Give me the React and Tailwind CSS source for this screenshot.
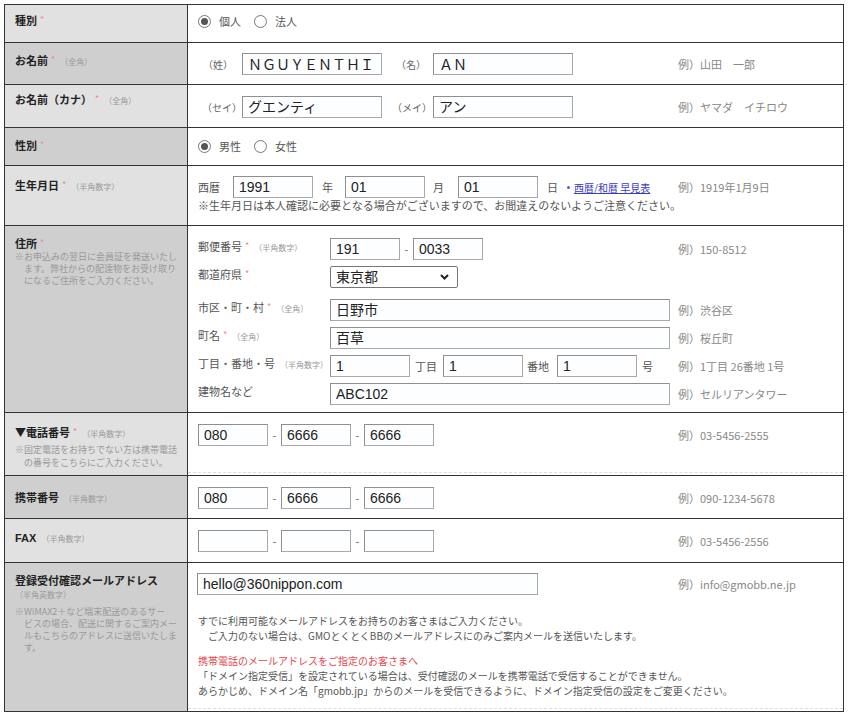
import React from 'react';

const ja = "font-['Noto_Sans_CJK_JP',sans-serif]";
const latin = "font-['Liberation_Sans','Noto_Sans_CJK_JP',sans-serif]";

const Req = () => <span className="ml-[3px] align-top text-[9px] font-normal text-[#f08a8a]">*</span>;
const Hint = ({ children }) => <span className="ml-[5px] text-[8px] font-normal text-[#999]">{children}</span>;

const Box = ({ w, children }) => (
    <div className={`h-[22px] ${w} shrink-0 overflow-hidden whitespace-nowrap border border-[#a9a9a9] border-l-[#8f8f8f] border-t-[#8f8f8f] bg-[#fcfeff] px-[5px] text-[14px] leading-[20px] text-[#222] ${latin}`}>
        {children}
    </div>
);

const Radio = ({ checked }) => (
    <span className="inline-flex h-[13px] w-[13px] items-center justify-center rounded-full border border-[#767676] bg-white">
        {checked && <span className="h-[7px] w-[7px] rounded-full bg-[#555]" />}
    </span>
);

const Dash = () => <span className="w-[13px] text-center text-[11px] text-[#666]">-</span>;

const Ex = ({ children }) => <div className="whitespace-nowrap text-[11px] text-[#888]">{children}</div>;

// one line of the value cell: main area + example column at x=678
const Line = ({ children, ex, className = '' }) => (
    <div className={`flex items-center ${className}`}>
        <div className="flex w-[480px] items-center">{children}</div>
        {ex && <Ex>{ex}</Ex>}
    </div>
);

const AddrLine = ({ label, children, ex, className = '' }) => (
    <div className={`flex items-start ${className}`}>
        <div className="w-[132px] shrink-0 whitespace-nowrap text-[11px] leading-[16px] text-[#555]">{label}</div>
        <div className="flex items-center">
            <div className="flex w-[348px] items-center text-[11px] text-[#555]">{children}</div>
            {ex && <Ex>{ex}</Ex>}
        </div>
    </div>
);

const Label = ({ bg, pt, children }) => (
    <div className={`w-[183px] shrink-0 border-r border-[#333] pl-[10px] ${bg} ${pt}`}>{children}</div>
);

const Title = ({ children }) => (
    <div className="whitespace-nowrap text-[11px] font-bold leading-[16px] text-[#222]">{children}</div>
);

const Note = ({ children, className = '' }) => (
    <div className={`whitespace-nowrap pl-[9px] -indent-[9px] text-[9px] text-[#999] ${className}`}>{children}</div>
);

const light = 'bg-[#e1e1e1]';
const dark = 'bg-[#cfcfcf]';

export default function App() {
    return (
        <div className={`h-[717px] w-[849px] bg-white pl-[4px] pt-[4px] ${ja}`}>
            <div className="w-[840px] border border-[#333]">
                {/* 種別 */}
                <div className="flex h-[38px] border-b border-[#333]">
                    <Label bg={light} pt="pt-[7px]">
                        <Title>種別<Req /></Title>
                    </Label>
                    <div className="flex-1 pl-[10px] pt-[8px]">
                        <div className="flex h-[16px] items-center text-[11px] text-[#555]">
                            <Radio checked />
                            <span className="ml-[8px]">個人</span>
                            <span className="ml-[13px] flex"><Radio /></span>
                            <span className="ml-[8px]">法人</span>
                        </div>
                    </div>
                </div>

                {/* お名前 */}
                <div className="flex h-[42px] border-b border-[#333]">
                    <Label bg={dark} pt="pt-[9px]">
                        <Title>お名前<Req /><Hint>（全角）</Hint></Title>
                    </Label>
                    <div className="flex-1 pl-[10px] pt-[10px]">
                        <Line ex="例）山田　一郎">
                            <span className="w-[44px] pl-[5px] text-[10px] text-[#666]">（姓）</span>
                            <Box w="w-[140px]"><span className={ja}>ＮＧＵＹＥＮＴＨＩ</span></Box>
                            <span className="w-[51px] pl-[14px] text-[10px] text-[#666]">（名）</span>
                            <Box w="w-[140px]"><span className={ja}>ＡＮ</span></Box>
                        </Line>
                    </div>
                </div>

                {/* お名前（カナ） */}
                <div className="flex h-[43px] border-b border-[#333]">
                    <Label bg={light} pt="pt-[6px]">
                        <Title>お名前（カナ）<Req /><Hint>（全角）</Hint></Title>
                    </Label>
                    <div className="flex-1 pl-[10px] pt-[11px]">
                        <Line ex="例）ヤマダ　イチロウ">
                            <span className="w-[44px] pl-[4px] text-[10px] text-[#666]">（セイ）</span>
                            <Box w="w-[140px]">グエンティ</Box>
                            <span className="w-[51px] pl-[10px] text-[10px] text-[#666]">（メイ）</span>
                            <Box w="w-[140px]">アン</Box>
                        </Line>
                    </div>
                </div>

                {/* 性別 */}
                <div className="flex h-[38px] border-b border-[#333]">
                    <Label bg={dark} pt="pt-[9px]">
                        <Title>性別<Req /></Title>
                    </Label>
                    <div className="flex-1 pl-[10px] pt-[10px]">
                        <div className="flex h-[16px] items-center text-[11px] text-[#555]">
                            <Radio checked />
                            <span className="ml-[8px]">男性</span>
                            <span className="ml-[13px] flex"><Radio /></span>
                            <span className="ml-[8px]">女性</span>
                        </div>
                    </div>
                </div>

                {/* 生年月日 */}
                <div className="flex h-[60px] border-b border-[#333]">
                    <Label bg={light} pt="pt-[11px]">
                        <Title>生年月日<Req /><Hint>（半角数字）</Hint></Title>
                    </Label>
                    <div className="flex-1 pl-[10px] pt-[10px]">
                        <Line ex="例）1919年1月9日">
                            <span className="w-[35px] text-[11px] text-[#555]">西暦</span>
                            <Box w="w-[80px]">1991</Box>
                            <span className="w-[32px] pl-[9px] text-[11px] text-[#555]">年</span>
                            <Box w="w-[80px]">01</Box>
                            <span className="w-[33px] pl-[8px] text-[11px] text-[#555]">月</span>
                            <Box w="w-[80px]">01</Box>
                            <span className="ml-[9px] text-[11px] text-[#555]">日</span>
                            <span className="ml-[9px] h-[3px] w-[3px] rounded-full bg-[#5a5ac8]" />
                            <span className="ml-[4px] whitespace-nowrap text-[10px] text-[#3b3bbd] underline">西暦/和暦 早見表</span>
                        </Line>
                        <div className="whitespace-nowrap text-[11px] leading-[14px] text-[#555]">
                            ※生年月日は本人確認に必要となる場合がございますので、お間違えのないようご注意ください。
                        </div>
                    </div>
                </div>

                {/* 住所 */}
                <div className="flex h-[187px] border-b border-[#333]">
                    <Label bg={dark} pt="pt-[9px]">
                        <Title>住所<Req /></Title>
                        <Note className="leading-[12px]">
                            ※お申込みの翌日に会員証を発送いたし<br />ます。弊社からの配達物をお受け取り<br />になるご住所をご入力ください。
                        </Note>
                    </Label>
                    <div className="flex-1 pl-[10px] pt-[12px]">
                        <AddrLine label={<>郵便番号<Req /><Hint>（半角数字）</Hint></>} ex="例）150-8512">
                            <Box w="w-[70px]">191</Box>
                            <Dash />
                            <Box w="w-[70px]">0033</Box>
                        </AddrLine>
                        <AddrLine className="mt-[6px]" label={<>都道府県<Req /></>}>
                            <div className={`flex h-[22px] w-[128px] items-center justify-between rounded-[2px] border border-[#767676] bg-white pl-[5px] pr-[8px] text-[14px] text-[#222] ${latin}`}>
                                <span>東京都</span>
                                <svg width="9" height="6" viewBox="0 0 9 6" fill="none">
                                    <path d="M1 1l3.5 3.5L8 1" stroke="#222" strokeWidth="2" />
                                </svg>
                            </div>
                        </AddrLine>
                        <AddrLine className="mt-[11px]" label={<>市区・町・村<Req /><Hint>（全角）</Hint></>} ex="例）渋谷区">
                            <Box w="w-[340px]">日野市</Box>
                        </AddrLine>
                        <AddrLine className="mt-[6px]" label={<>町名<Req /><Hint>（全角）</Hint></>} ex="例）桜丘町">
                            <Box w="w-[340px]">百草</Box>
                        </AddrLine>
                        <AddrLine className="mt-[6px]" label={<>丁目・番地・号<Hint>（半角数字）</Hint></>} ex="例）1丁目 26番地 1号">
                            <Box w="w-[80px]">1</Box>
                            <span className="ml-[5px] w-[28px]">丁目</span>
                            <Box w="w-[80px]">1</Box>
                            <span className="ml-[4px] w-[30px]">番地</span>
                            <Box w="w-[80px]">1</Box>
                            <span className="ml-[5px]">号</span>
                        </AddrLine>
                        <AddrLine className="mt-[6px]" label="建物名など" ex="例）セルリアンタワー">
                            <Box w="w-[340px]">ABC102</Box>
                        </AddrLine>
                    </div>
                </div>

                {/* 電話番号 */}
                <div className="flex h-[63px] border-b border-[#333]">
                    <Label bg={light} pt="pt-[11px]">
                        <Title>▼電話番号<Req /><Hint>（半角数字）</Hint></Title>
                        <Note className="mt-[1px] leading-[13px]">
                            ※固定電話をお持ちでない方は携帯電話<br />の番号をこちらにご入力ください。
                        </Note>
                    </Label>
                    <div className="flex flex-1 flex-col pb-[2px]">
                        <div className="flex-1 border-b border-dashed border-[#ddd] pl-[10px] pt-[11px]">
                            <Line ex="例）03-5456-2555">
                                <Box w="w-[70px]">080</Box>
                                <Dash />
                                <Box w="w-[70px]">6666</Box>
                                <Dash />
                                <Box w="w-[70px]">6666</Box>
                            </Line>
                        </div>
                    </div>
                </div>

                {/* 携帯番号 */}
                <div className="flex h-[43px] border-b border-[#333]">
                    <Label bg={dark} pt="pt-[13px]">
                        <Title>携帯番号<Hint>（半角数字）</Hint></Title>
                    </Label>
                    <div className="flex-1 pl-[10px] pt-[11px]">
                        <Line ex="例）090-1234-5678">
                            <Box w="w-[70px]">080</Box>
                            <Dash />
                            <Box w="w-[70px]">6666</Box>
                            <Dash />
                            <Box w="w-[70px]">6666</Box>
                        </Line>
                    </div>
                </div>

                {/* FAX */}
                <div className="flex h-[44px] border-b border-[#333]">
                    <Label bg={light} pt="pt-[10px]">
                        <Title><span className={latin}>FAX</span><Hint>（半角数字）</Hint></Title>
                    </Label>
                    <div className="flex-1 pl-[10px] pt-[11px]">
                        <Line ex="例）03-5456-2556">
                            <Box w="w-[70px]" />
                            <Dash />
                            <Box w="w-[70px]" />
                            <Dash />
                            <Box w="w-[70px]" />
                        </Line>
                    </div>
                </div>

                {/* 登録受付確認メールアドレス */}
                <div className="flex h-[148px]">
                    <Label bg={dark} pt="pt-[9px]">
                        <Title>登録受付確認メールアドレス</Title>
                        <div className="text-[8px] leading-[14px] text-[#999]">（半角英数字）</div>
                        <Note className="mt-[4px] leading-[12px]">
                            ※WiMAX2＋など端末配送のあるサー<br />ビスの場合、配送に関するご案内メー<br />ルもこちらのアドレスに送信いたしま<br />す。
                        </Note>
                    </Label>
                    <div className="flex flex-1 flex-col pb-[2px]">
                        <div className="flex-1 border-b border-dashed border-[#ddd] pl-[10px] pt-[10px]">
                            <Line ex="例）info@gmobb.ne.jp">
                                <div className="-ml-[1px]">
                                    <Box w="w-[341px]">hello@360nippon.com</Box>
                                </div>
                            </Line>
                            <div className="mt-[18px] whitespace-nowrap text-[10px] leading-[15px] text-[#555]">
                                <div>すでに利用可能なメールアドレスをお持ちのお客さまはご入力ください。</div>
                                <div className="pl-[10px]">ご入力のない場合は、GMOとくとくBBのメールアドレスにのみご案内メールを送信いたします。</div>
                            </div>
                            <div className="mt-[10px] whitespace-nowrap text-[10px] leading-[15px] text-[#555]">
                                <div className="text-[#e4474f]">携帯電話のメールアドレスをご指定のお客さまへ</div>
                                <div>「ドメイン指定受信」を設定されている場合は、受付確認のメールを携帯電話で受信することができません。</div>
                                <div>あらかじめ、ドメイン名「gmobb.jp」からのメールを受信できるように、ドメイン指定受信の設定をご変更ください。</div>
                            </div>
                        </div>
                    </div>
                </div>
            </div>
        </div>
    );
}
